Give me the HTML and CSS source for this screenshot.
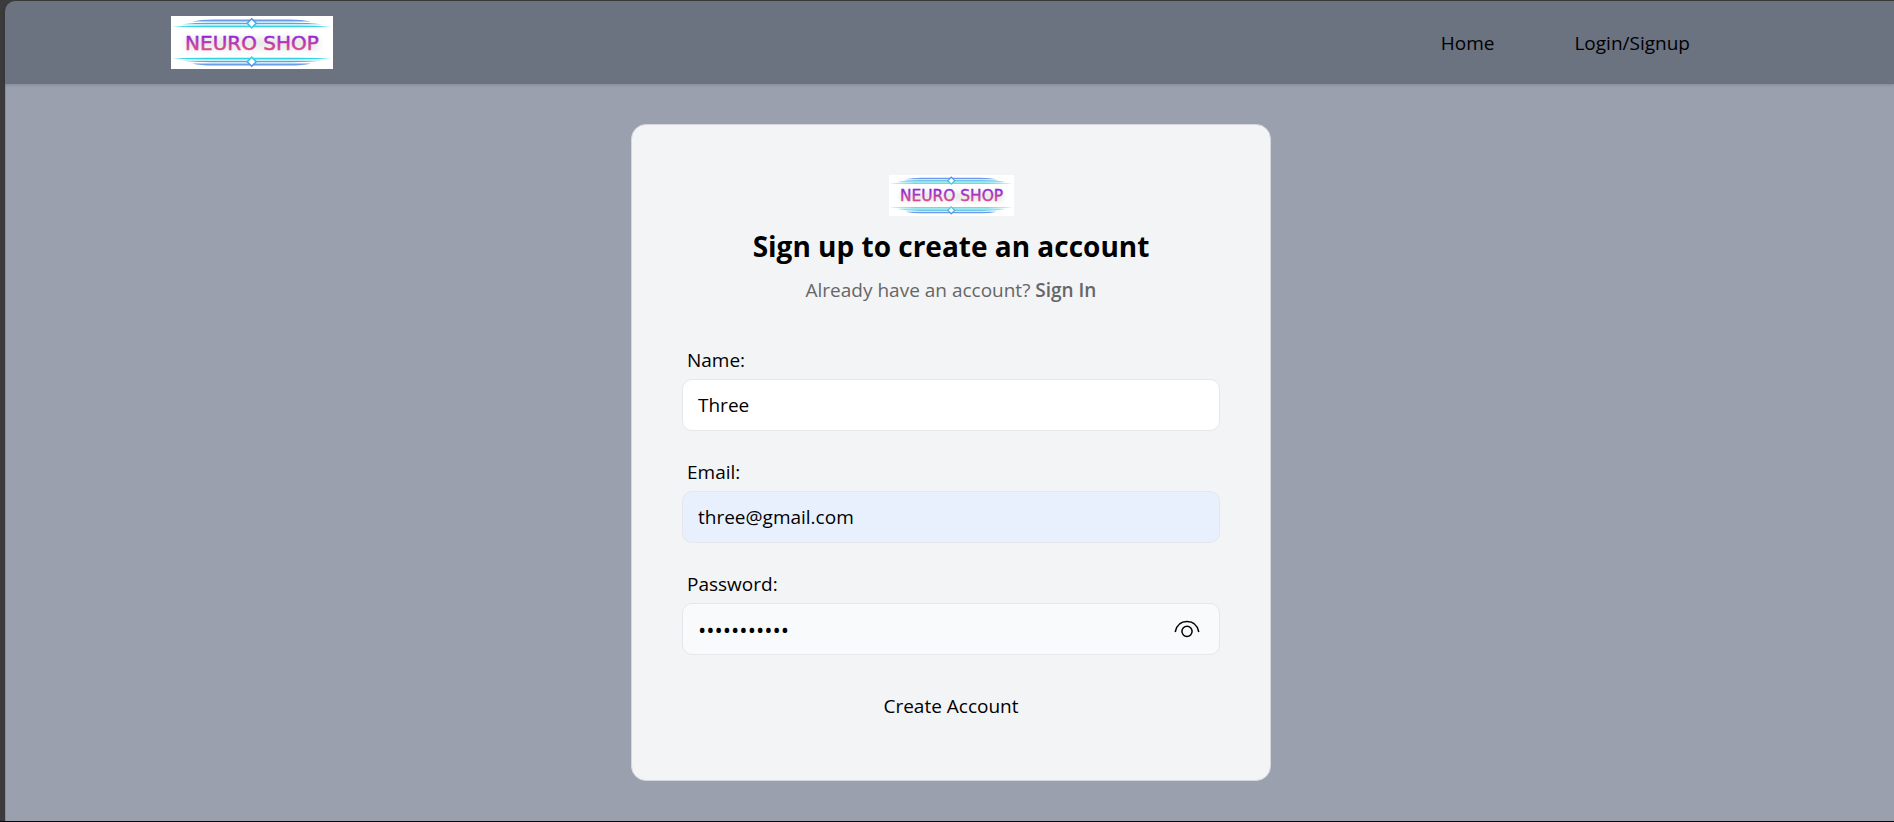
FILE: index.html
```html
<!DOCTYPE html>
<html lang="en">
<head>
<meta charset="utf-8">
<meta name="viewport" content="width=device-width, initial-scale=1">
<title>Neuro Shop – Sign up</title>
<link rel="stylesheet" href="styles.css">
</head>
<body>
<svg width="0" height="0" class="defs" aria-hidden="true">
  <defs>
    <linearGradient id="word" x1="0" y1="0" x2="0" y2="1">
      <stop offset="0.2" stop-color="#9326d6"/>
      <stop offset="0.8" stop-color="#dd4c84"/>
    </linearGradient>
    <linearGradient id="gem" x1="0" y1="0" x2="0" y2="1">
      <stop offset="0" stop-color="#5b86ea"/>
      <stop offset="1" stop-color="#35dbe0"/>
    </linearGradient>
    <filter id="glow" x="-10%" y="-60%" width="120%" height="220%">
      <feGaussianBlur stdDeviation="3"/>
    </filter>
    <g id="rails">
      <path d="M21 5.600Q30 3.600 42 3.600H119Q131 3.600 140 5.600Z" fill="#6a9cec"/>
      <path d="M11 8.200Q24 6.800 40 6.800H121Q137 6.800 151 8.200Z" fill="#45b0e2"/>
      <path d="M1 10.600Q16 9.600 34 9.600H127Q145 9.600 160 10.600Q145 11.200 127 11.200H34Q16 11.200 1 10.600Z" fill="#35d3e0"/>
      <path d="M80.700 2.800L85.200 7.300L80.700 11.800L76.200 7.300Z" fill="#fff" stroke="url(#gem)" stroke-width="1.6"/>
    </g>
    <symbol id="logo" viewBox="0 0 162 53">
      <rect width="162" height="53" fill="#fff"/>
      <rect x="14" y="21" width="134" height="13" fill="#000" opacity="0.08" filter="url(#glow)"/>
      <use href="#rails"/>
      <use href="#rails" transform="translate(0 53) scale(1 -1)"/>
      <text x="81" y="34" text-anchor="middle" class="wordmark" fill="url(#word)" stroke="url(#word)">NEURO SHOP</text>
    </symbol>
  </defs>
</svg>

<div class="page">
  <header class="header">
    <a href="#" aria-label="Neuro Shop"><svg class="logo" viewBox="0 0 162 53"><use href="#logo"/></svg></a>
    <nav class="nav">
      <a href="#">Home</a>
      <a href="#">Login/Signup</a>
    </nav>
  </header>
  <main class="main">
    <section class="card">
      <svg class="logo logo-small" viewBox="0 0 162 53" role="img" aria-label="Neuro Shop"><use href="#logo"/></svg>
      <h1 class="title">Sign up to create an account</h1>
      <p class="subtitle">Already have an account? <a href="#">Sign In</a></p>
      <form class="form">
        <div class="field">
          <label for="name">Name:</label>
          <input class="input" id="name" type="text" value="Three">
        </div>
        <div class="field">
          <label for="email">Email:</label>
          <input class="input input-filled" id="email" type="email" value="three@gmail.com">
        </div>
        <div class="field">
          <label for="password">Password:</label>
          <div class="input password">
            <input id="password" type="password" value="threethreee">
            <button class="eye" type="button" aria-label="Show password">
              <svg viewBox="0 0 30 30" width="30" height="30" fill="none" stroke="currentColor" stroke-width="1.5">
                <path d="M3.200 18C4.600 11.300 9.200 7.600 15 7.600S25.400 11.300 26.800 18"/>
                <circle cx="15" cy="17.300" r="5.100"/>
              </svg>
            </button>
          </div>
        </div>
        <button class="submit" type="submit">Create Account</button>
      </form>
    </section>
  </main>
</div>
</body>
</html>
```
FILE: styles.css
```css
* {
  box-sizing: border-box;
}

body {
  margin: 0;
  background: #3b3b3b;
  color: #000;
  font-family: "Segoe UI", "Open Sans", "Noto Sans", sans-serif;
  font-size: 19px;
  line-height: 28px;
}

a {
  color: inherit;
  text-decoration: none;
}

input,
button {
  font: inherit;
  color: inherit;
  border: 0;
  background: none;
  padding: 0;
}

.defs {
  position: absolute;
}

.page {
  display: flex;
  flex-direction: column;
  min-height: 100vh;
  padding: 1px 0 0 5px;
  border-bottom: 2px solid #05060f;
}

.header {
  display: flex;
  align-items: center;
  justify-content: space-between;
  padding: 15px 204px 15px 166px;
  background: #6b7280;
  border-top-left-radius: 10px;
  box-shadow: 0 1px 3px rgba(0, 0, 0, 0.15);
  z-index: 1;
}

.header > a {
  display: flex;
}

.logo {
  display: block;
  width: 162px;
  height: 53px;
}

.logo-small {
  width: 125px;
  height: 41px;
  margin: 0 auto 10px;
}

.wordmark {
  font-family: "DejaVu Sans", sans-serif;
  font-size: 20px;
  stroke-width: 0.5px;
}

.nav {
  display: flex;
  gap: 80px;
}

.main {
  flex: 1;
  display: flex;
  justify-content: center;
  align-items: flex-start;
  padding: 40px 0 40px 2px;
  background: #9aa0ae;
  border-left: 1px solid #868c98;
}

.card {
  width: 100%;
  max-width: 640px;
  padding: 50px;
  background: #f3f4f6;
  border: 1px solid #d5d7db;
  border-radius: 15px;
}

.title {
  margin: 0 0 10px;
  font-size: 28px;
  line-height: 40px;
  font-weight: 700;
  text-align: center;
}

.subtitle {
  margin: 0 0 42px;
  color: #666;
  text-align: center;
}

.subtitle a {
  font-weight: 600;
}

.form {
  display: flex;
  flex-direction: column;
  gap: 27px;
}

.field {
  display: flex;
  flex-direction: column;
  gap: 5px;
}

.field label {
  padding-left: 5px;
}

.input {
  width: 100%;
  height: 52px;
  padding: 0 15px;
  background: #fff;
  border: 1px solid #e5e7eb;
  border-radius: 10px;
}

.input-filled {
  background: #e8f0fe;
}

.password {
  display: flex;
  align-items: center;
  padding-right: 17px;
  background: #f9fafb;
}

.password input {
  flex: 1;
  min-width: 0;
  font-size: 22px;
}

.eye {
  display: flex;
}

.submit {
  height: 48px;
}
```
